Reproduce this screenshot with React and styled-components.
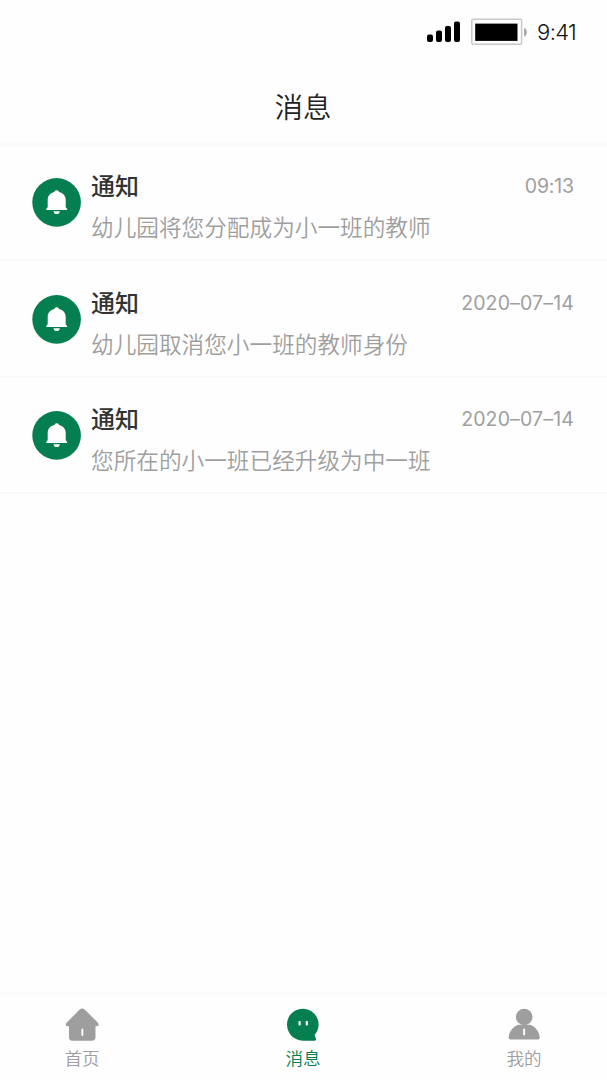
import React from 'react';
import styled, { createGlobalStyle } from 'styled-components';

const GREEN = '#057f50';
const GREY = '#9e9e9e';

const GlobalStyle = createGlobalStyle`
  * { box-sizing: border-box; }
  body {
    margin: 0;
    background: #fefefe;
    font-family: 'Noto Sans CJK SC', sans-serif;
  }
`;

const Screen = styled.div`
  display: flex;
  flex-direction: column;
  width: 607px;
  height: 1080px;
  overflow: hidden;
`;

const StatusBar = styled.div`
  display: flex;
  align-items: center;
  justify-content: flex-end;
  flex: none;
  height: 64px;
  padding-right: 29px;
`;

const Clock = styled.span`
  width: 41px;
  margin-left: 9px;
  font: 360 22px/26px Inter, sans-serif;
  letter-spacing: -0.6px;
  color: #111;
  white-space: nowrap;
`;

const Header = styled.header`
  display: flex;
  justify-content: center;
  flex: none;
  height: 83px;
  padding-top: 22px;
  border-bottom: 5px solid #fafafa;
`;

const Title = styled.h1`
  margin: 0 1px 0 0;
  font-size: 28.5px;
  line-height: 40px;
  font-weight: 350;
  color: #222;
`;

const List = styled.main`
  flex: 1;
`;

const Row = styled.article`
  display: flex;
  height: 116.5px;
  padding: 20.5px 33px 0 32px;
  border-bottom: 2px solid #f9f9f9;

  &:first-child { height: 114px; padding-top: 18px; }
`;

const Badge = styled.span`
  flex: none;
  width: 49px;
  height: 49px;
  margin: 13px 10px 0 0;
`;

const Content = styled.div`
  flex: 1;
  margin-top: -1px;
`;

const RowHead = styled.div`
  display: flex;
  justify-content: space-between;
  height: 42px;
  line-height: 42px;
`;

const RowTitle = styled.h2`
  margin: 0;
  font-size: 24px;
  line-height: inherit;
  font-weight: 500;
  color: #333;
`;

const Time = styled.time`
  margin-top: 1px;
  font-family: Inter, sans-serif;
  font-size: 19.5px;
  font-weight: 370;
  letter-spacing: ${(p) => p.$spacing};
  color: ${GREY};
`;

const Message = styled.p`
  margin: 0;
  font-size: 22.65px;
  line-height: 41px;
  font-weight: 350;
  color: ${GREY};
`;

const TabBar = styled.nav`
  display: flex;
  justify-content: space-between;
  flex: none;
  height: 88px;
  padding: 12px 65px 0 64px;
  border-top: 4px solid #fbfbfb;
`;

const Tab = styled.div`
  display: flex;
  flex-direction: column;
  align-items: center;
  width: 36px;
  font-size: 17.6px;
  line-height: 26px;
  font-weight: 350;
  color: ${(p) => (p.$active ? GREEN : GREY)};
  white-space: nowrap;

  svg { display: block; margin-bottom: 3px; }
`;

const Signal = () => (
  <svg width="34" height="22" viewBox="0 0 34 22" fill="#000">
    <rect x="0" y="13.4" width="6" height="7.6" rx="2" />
    <rect x="9" y="9.5" width="6" height="11.5" rx="2" />
    <rect x="18" y="5" width="6" height="16" rx="2" />
    <rect x="27" y="0.5" width="6" height="20.5" rx="2" />
  </svg>
);

const Battery = () => (
  <svg width="57" height="28" viewBox="0 0 57 28" style={{ marginLeft: 10 }}>
    <rect x="0.8" y="1.3" width="49.8" height="25" rx="1.2" fill="#fff" stroke="#c8c8c8" strokeWidth="1.5" />
    <rect x="4.2" y="5.6" width="42.3" height="17.3" fill="#000" />
    <path d="M53 9.8c3.8 1 3.8 8 0 9z" fill="#aaa" />
  </svg>
);

const Bell = () => (
  <svg width="49" height="49" viewBox="0 0 49 49">
    <circle cx="24.6" cy="24.4" r="24.3" fill={GREEN} />
    <path
      d="M24.7 12.3c1.3 0 2.2.8 2.3 1.8 3.9.9 6.7 3.700 6.700 7.600v6.900c0 .8.3 1.400 1.100 1.900.8.500.6 1.500-.3 1.500H14.900c-.9 0-1.100-1-.3-1.500.8-.5 1.100-1.100 1.100-1.900v-6.900c0-3.900 2.800-6.700 6.700-7.600.1-1 1-1.800 2.300-1.800z"
      fill="#fff"
    />
    <path d="M21.5 33.2h6.4c-.4 1.900-1.500 2.900-3.200 2.900s-2.800-1-3.200-2.900z" fill="#fff" />
  </svg>
);

const HomeIcon = () => (
  <svg width="34" height="34" viewBox="0 0 34 34">
    <path
      d="M14.7 1.5c1.7-1.3 3.3-1.3 5 0L32.900 14.800c1.300 1.500.8 3.500-1 3.500H30.500v11.200c0 2-1.200 3.200-3.200 3.200H7.200C5.200 32.700 4 31.500 4 29.500V18.300H2.500c-1.800 0-2.300-2-1-3.500z"
      fill={GREY}
    />
    <rect x="16.4" y="20.5" width="1.9" height="7.5" rx=".9" fill="#fff" />
  </svg>
);

const ChatIcon = () => (
  <svg width="34" height="34" viewBox="0 0 34 34">
    <path
      d="M16.8.8c8.800 0 15.800 7 15.800 15.800 0 4-1.500 7.600-4.100 10.400l1.400 3.600c.5 1.400 0 2.100-1.300 2.100H16.800C8 32.700 1 25.500 1 16.600S8 .8 16.800.8z"
      fill={GREEN}
    />
    <rect x="12.5" y="13" width="2.2" height="4.6" rx=".8" fill="#fff" />
    <rect x="19.7" y="13" width="2.2" height="4.6" rx=".8" fill="#fff" />
  </svg>
);

const PersonIcon = () => (
  <svg width="34" height="34" viewBox="0 0 34 34" fill={GREY}>
    <circle cx="17.2" cy="9" r="8.3" />
    <path d="M11 16.800h12.400c5.200 2 8.900 7 9.300 12.700.1 1.300-.6 2-1.800 2H3.500c-1.200 0-1.900-.7-1.800-2C2.100 23.800 5.800 18.800 11 16.800z" />
    <rect x="16.2" y="20.5" width="1.9" height="7" rx=".9" fill="#fff" />
  </svg>
);

const messages = [
  { time: '09:13', spacing: '-0.15px', text: '幼儿园将您分配成为小一班的教师' },
  { time: '2020–07–14', spacing: '0.15px', text: '幼儿园取消您小一班的教师身份' },
  { time: '2020–07–14', spacing: '0.15px', text: '您所在的小一班已经升级为中一班' },
];

const tabs = [
  { label: '首页', Icon: HomeIcon },
  { label: '消息', Icon: ChatIcon, active: true },
  { label: '我的', Icon: PersonIcon },
];

export default function App() {
  return (
    <Screen>
      <GlobalStyle />
      <StatusBar>
        <Signal />
        <Battery />
        <Clock>9:41</Clock>
      </StatusBar>
      <Header>
        <Title>消息</Title>
      </Header>
      <List>
        {messages.map((m) => (
          <Row key={m.text}>
            <Badge><Bell /></Badge>
            <Content>
              <RowHead>
                <RowTitle>通知</RowTitle>
                <Time $spacing={m.spacing}>{m.time}</Time>
              </RowHead>
              <Message>{m.text}</Message>
            </Content>
          </Row>
        ))}
      </List>
      <TabBar>
        {tabs.map(({ label, Icon, active }) => (
          <Tab key={label} $active={active}>
            <Icon />
            {label}
          </Tab>
        ))}
      </TabBar>
    </Screen>
  );
}
